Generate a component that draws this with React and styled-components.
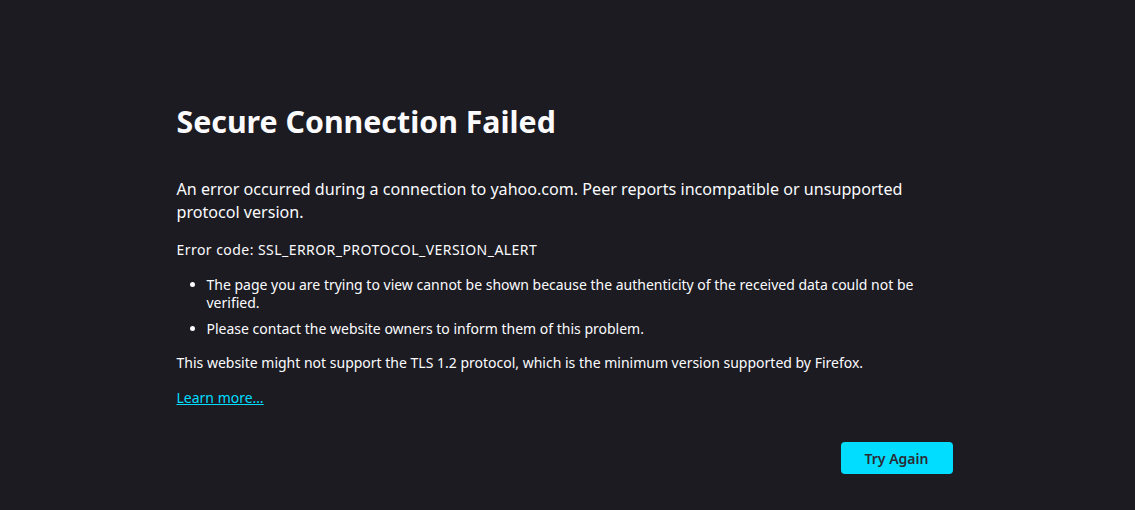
import React from 'react';
import styled, { createGlobalStyle } from 'styled-components';

const GlobalStyle = createGlobalStyle`
  html, body {
    margin: 0;
    padding: 0;
    background: #1c1b22;
  }
  body {
    font-family: "Noto Sans", "Open Sans", sans-serif;
    color: #fbfbfe;
  }
`;

const Page = styled.div`
  min-height: 510px;
  box-sizing: border-box;
  padding: 100px 6px 0 0;
  display: flex;
  justify-content: center;
`;

const Container = styled.div`
  width: 776px;
  display: flex;
  flex-direction: column;
`;

const Title = styled.h1`
  margin: 0 0 34px;
  font-size: 30.3px;
  font-weight: 700;
  line-height: 44px;
`;

const Lead = styled.p`
  margin: 0 0 17px;
  font-size: 16.1px;
  line-height: 23px;
`;

const Small = styled.p`
  margin: 0 0 ${(props) => props.$gap}px;
  font-size: 14px;
  line-height: 18px;
  letter-spacing: ${(props) => (props.$wide ? '0.45px' : 'normal')};
`;

const List = styled.ul`
  margin: 0 0 16px;
  padding-left: 30px;
  font-size: 14px;
  line-height: 18px;

  li {
    margin-bottom: 8px;
  }
  li:last-child {
    margin-bottom: 0;
  }
`;

const Link = styled.a`
  font-size: 14px;
  line-height: 18px;
  color: #00ddff;
  text-decoration: underline;
  align-self: flex-start;
  margin-top: 5px;
`;

const Actions = styled.div`
  display: flex;
  justify-content: flex-end;
  margin-top: 35px;
`;

const Button = styled.button`
  width: 112px;
  height: 32px;
  border: none;
  border-radius: 4px;
  background: #00ddff;
  color: #2b2a33;
  font-family: inherit;
  font-size: 14px;
  font-weight: 600;
  cursor: pointer;
`;

export default function App() {
  return (
    <>
      <GlobalStyle />
      <Page>
        <Container>
          <Title>Secure Connection Failed</Title>
          <Lead>
            An error occurred during a connection to yahoo.com. Peer reports incompatible or unsupported
            protocol version.
          </Lead>
          <Small $gap={17} $wide>Error code: SSL_ERROR_PROTOCOL_VERSION_ALERT</Small>
          <List>
            <li>
              The page you are trying to view cannot be shown because the authenticity of the received data could not be
              verified.
            </li>
            <li>Please contact the website owners to inform them of this problem.</li>
          </List>
          <Small $gap={12}>
            This website might not support the TLS 1.2 protocol, which is the minimum version supported by Firefox.
          </Small>
          <Link href="#" onClick={(e) => e.preventDefault()}>Learn more…</Link>
          <Actions>
            <Button>Try Again</Button>
          </Actions>
        </Container>
      </Page>
    </>
  );
}
